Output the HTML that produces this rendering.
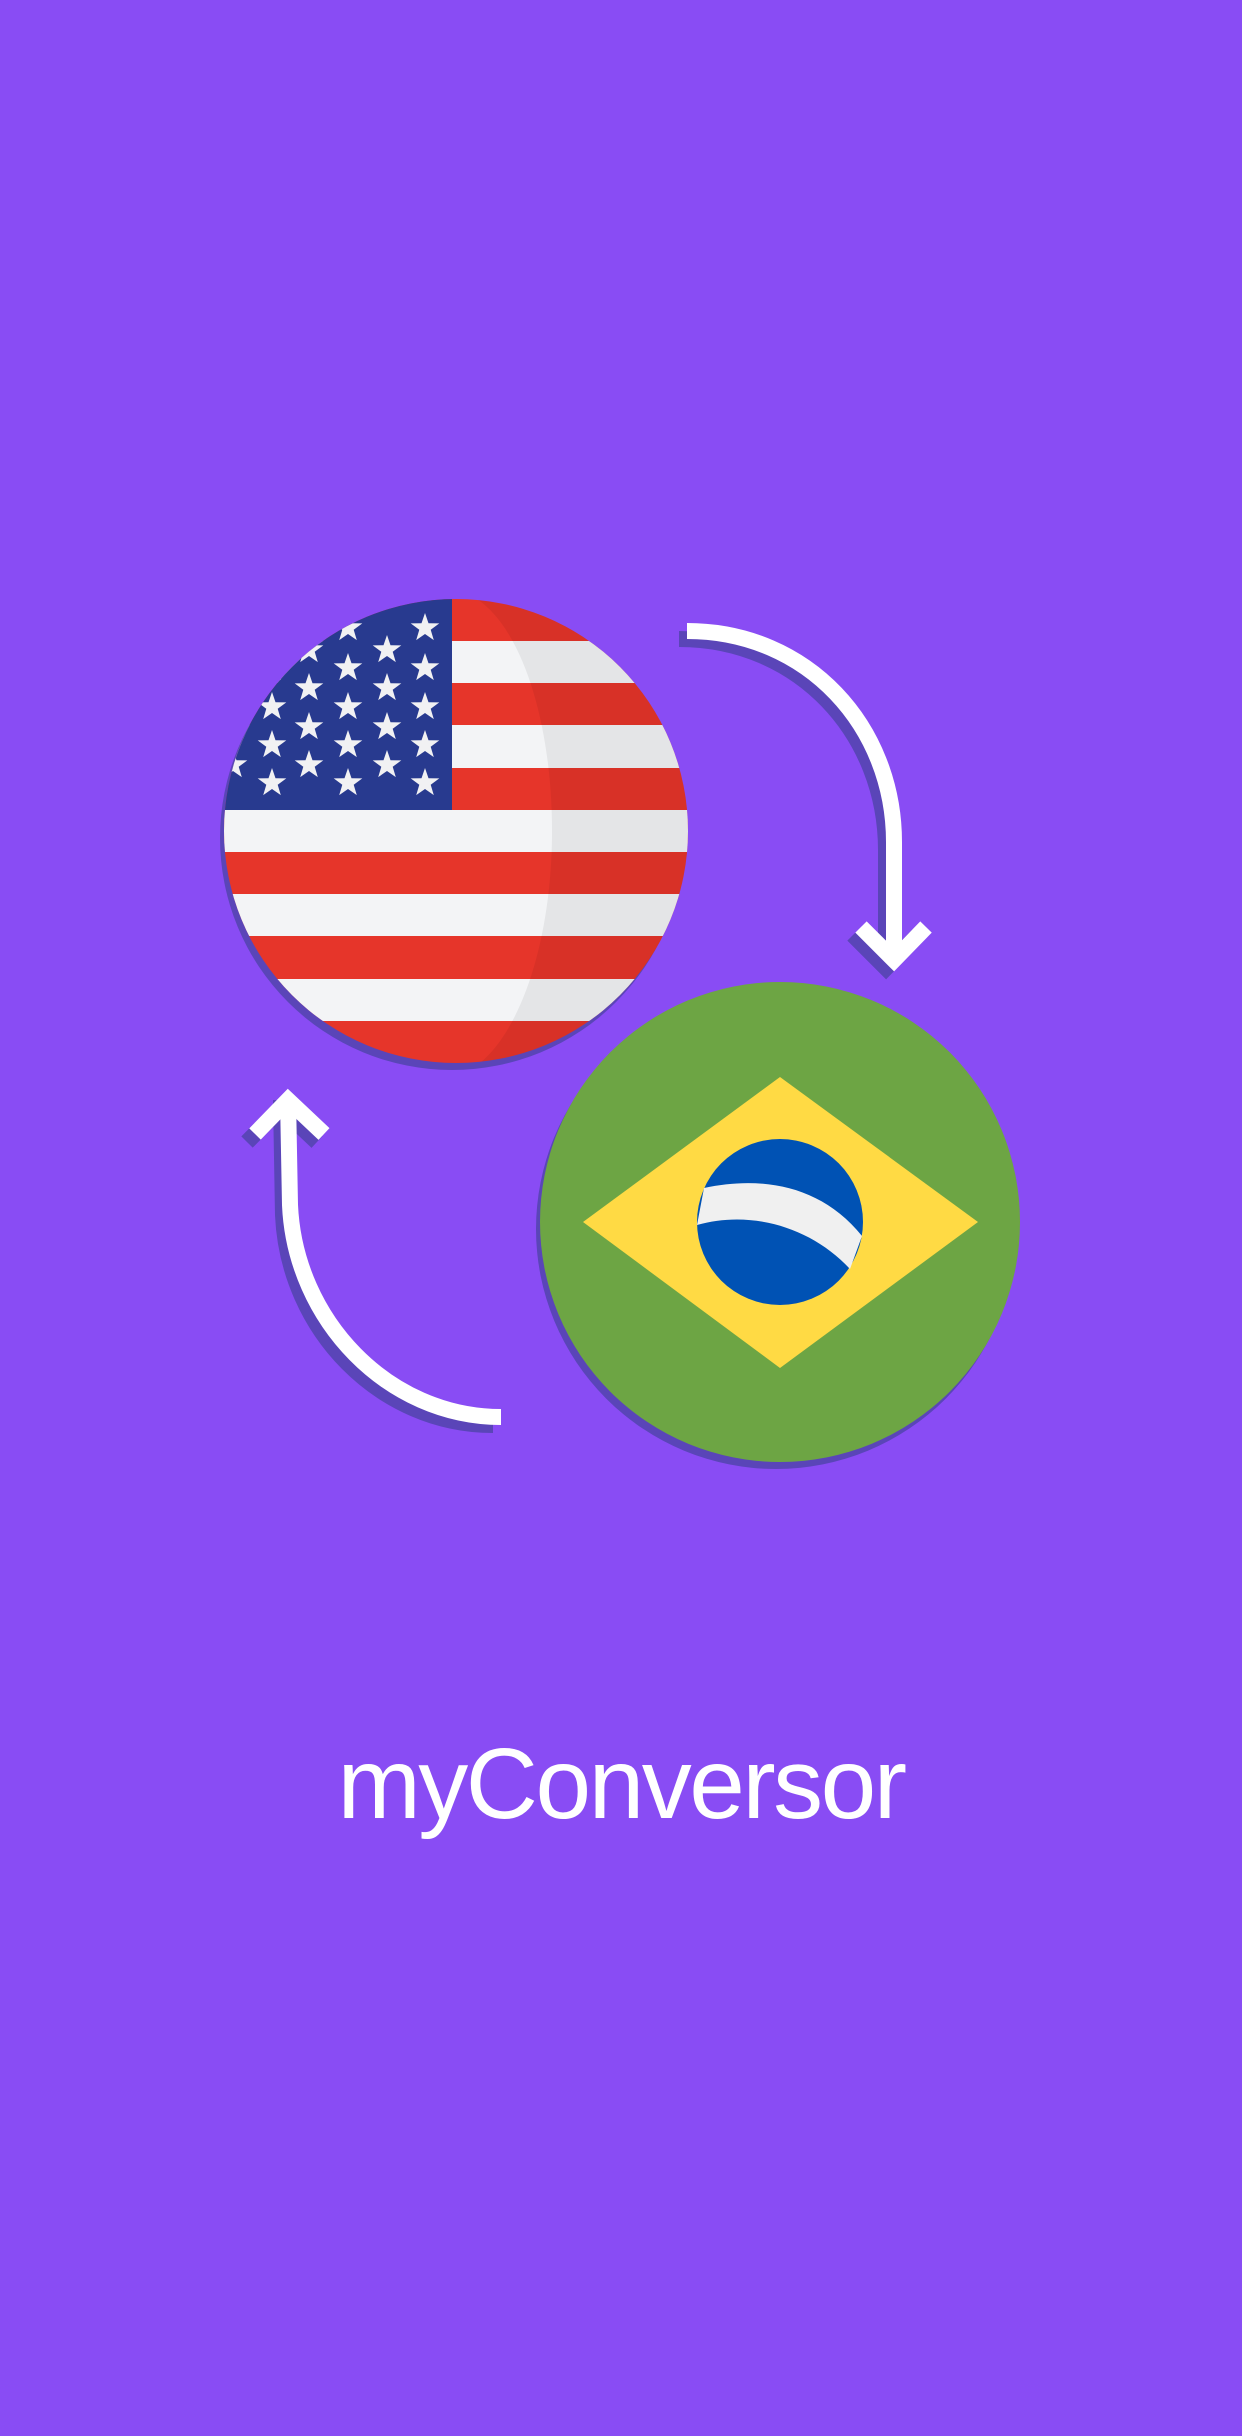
<!DOCTYPE html>
<html><head><meta charset="utf-8"><style>
html,body{margin:0;padding:0;background:#894cf4;}
body{width:1242px;height:2436px;position:relative;overflow:hidden;}
.t{position:absolute;left:0;width:1242px;top:1724px;text-align:center;color:#fff;font-family:"Liberation Sans",sans-serif;font-size:100px;line-height:120px;letter-spacing:-2.5px;}
</style></head><body>
<svg width="1242" height="2436" style="position:absolute;left:0;top:0">
<defs>
<clipPath id="us"><circle cx="456" cy="831" r="232"/></clipPath>
<clipPath id="br"><circle cx="780" cy="1222" r="240"/></clipPath>
<polygon id="st" points="0,-15 3.5,-4.8 14.3,-4.6 5.7,1.8 8.8,12.1 0,6 -8.8,12.1 -5.7,1.8 -14.3,-4.6 -3.5,-4.8" fill="#f1f1f3"/>
</defs>
<circle cx="452" cy="838" r="232" fill="#5a45b8"/>
<circle cx="776" cy="1229" r="240" fill="#5a45b8"/>
<g fill="none" stroke="#5a45b8" stroke-width="16">
<path d="M679 639 C800 639 886 735 886 850 L886 960"/>
<path d="M853 935 L886 968 L918 935"/>
<path d="M281 1100 L283 1215 C288 1330 380 1425 493 1425"/>
<path d="M247 1142 L281 1108 L317 1142"/>
</g>
<g clip-path="url(#us)">
<rect x="220" y="595" width="480" height="480" fill="#e6352a"/>
<g fill="#f3f4f6">
<rect x="220" y="641" width="480" height="42"/>
<rect x="220" y="725" width="480" height="43"/>
<rect x="220" y="810" width="480" height="42"/>
<rect x="220" y="894" width="480" height="42"/>
<rect x="220" y="979" width="480" height="42"/>
</g>
<rect x="220" y="595" width="232" height="215" fill="#283a8f"/>
<g>
<use href="#st" x="348" y="628"/><use href="#st" x="425" y="628"/><use href="#st" x="272" y="628"/>
<use href="#st" x="309" y="650"/><use href="#st" x="387" y="650"/><use href="#st" x="233" y="650"/>
<use href="#st" x="272" y="668"/><use href="#st" x="348" y="668"/><use href="#st" x="425" y="668"/>
<use href="#st" x="233" y="688"/><use href="#st" x="309" y="688"/><use href="#st" x="387" y="688"/>
<use href="#st" x="272" y="707"/><use href="#st" x="348" y="707"/><use href="#st" x="425" y="707"/>
<use href="#st" x="233" y="727"/><use href="#st" x="309" y="727"/><use href="#st" x="387" y="727"/>
<use href="#st" x="272" y="745"/><use href="#st" x="348" y="745"/><use href="#st" x="425" y="745"/>
<use href="#st" x="233" y="765"/><use href="#st" x="309" y="765"/><use href="#st" x="387" y="765"/>
<use href="#st" x="272" y="783"/><use href="#st" x="348" y="783"/><use href="#st" x="425" y="783"/>
</g>
<path d="M470 595 C520 620 552 720 552 831 C552 940 520 1040 470 1070 L700 1070 L700 595 Z" fill="#000" opacity="0.06"/>
</g>
<circle cx="780" cy="1222" r="240" fill="#6da544"/>
<polygon points="583,1222 780,1077 978,1222 780,1368" fill="#ffda44"/>
<circle cx="780" cy="1222" r="83" fill="#0052b4"/>
<g clip-path="url(#br)">
<path d="M704 1188 C760 1176 820 1184 862 1236 L850 1269 C810 1226 750 1210 697 1225 Z" fill="#f0f0f0"/>
</g>
<g fill="none" stroke="#fff" stroke-width="16">
<path d="M687 631 C808 631 894 727 894 842 L894 952"/>
<path d="M861 927 L894 960 L926 927"/>
<path d="M288 1098 L290 1205 C295 1320 388 1417 501 1417"/>
<path d="M255 1134 L288 1100 L324 1134"/>
</g>
</svg>
<div class="t">myConversor</div>
</body></html>
